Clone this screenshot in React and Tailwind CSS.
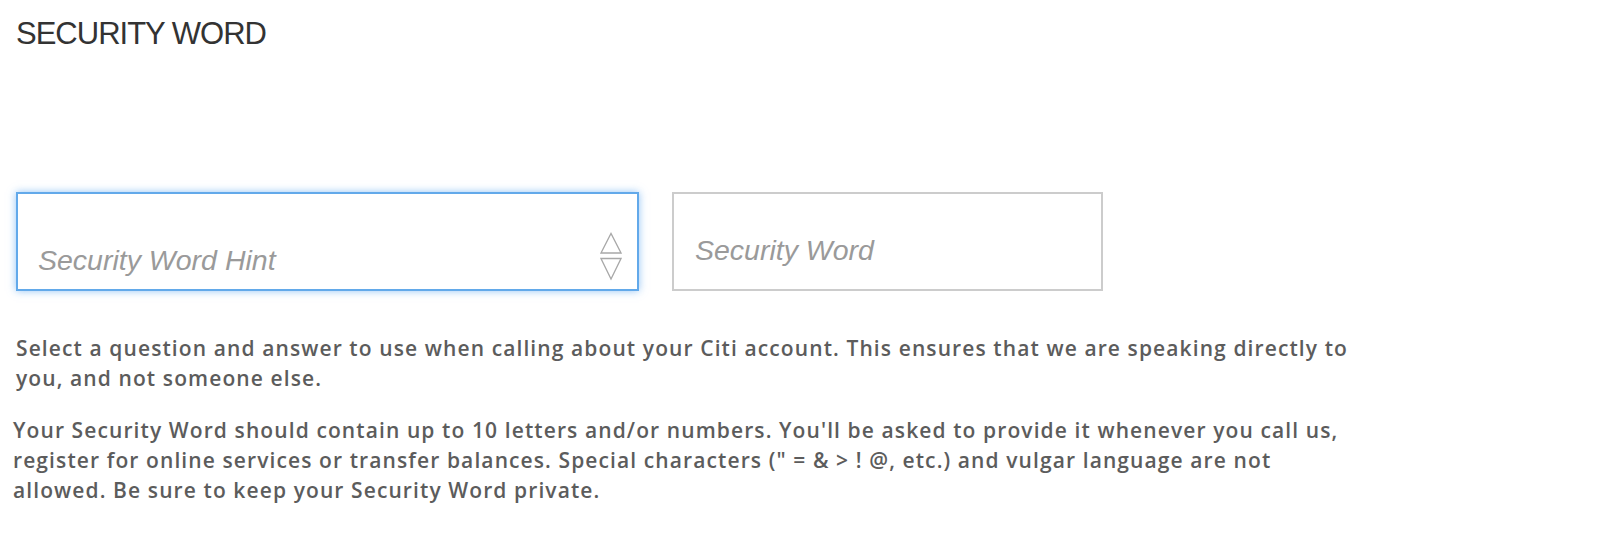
import React, { useState } from 'react';

const ArrowsIcon = () => (
  <svg width="22" height="50" viewBox="0 0 22 50" fill="none" stroke="#a8a8a8" strokeWidth="1.3">
    <polygon points="1,21 11,1.5 21,21" />
    <polygon points="1,26.5 21,26.5 11,47" />
  </svg>
);

const SecurityWord = () => {
  const [word, setWord] = useState('');

  return (
    <div className="min-h-screen bg-white pl-4 pt-4 font-['Liberation_Sans',Arial,sans-serif]">
      <h1 className="text-[31px] leading-9 tracking-[-1px] text-[#333]">SECURITY WORD</h1>

      <div className="mt-[140px] flex gap-[33px]">
        {/* hint select */}
        <div className="flex h-[99px] w-[623px] items-end justify-between border-2 border-[#62a9ea] pb-[13px] pl-[20px] pr-[15px] shadow-[0_0_8px_rgba(90,165,240,0.65)]">
          <span className="text-[28.5px] italic leading-[32px] text-[#9a9a9a]">Security Word Hint</span>
          <div className="mb-[-6px]">
            <ArrowsIcon />
          </div>
        </div>

        {/* word input */}
        <div className="h-[99px] w-[431px] border-2 border-[#cccccc]">
          <input
            type="text"
            maxLength={10}
            value={word}
            onChange={(e) => setWord(e.target.value)}
            placeholder="Security Word"
            className="h-full w-full pl-[21px] pt-[18px] text-[28.5px] text-[#333] outline-none placeholder:italic placeholder:text-[#9a9a9a]"
          />
        </div>
      </div>

      <div className="mt-[42px] w-[1340px] font-['Open_Sans',sans-serif] text-[21px] font-semibold leading-[30px] tracking-[1.1px] text-[#5c5c5c]">
        <p>
          Select a question and answer to use when calling about your Citi account. This ensures that we are speaking
          directly to you, and not someone else.
        </p>
        <p className="ml-[-3px] mt-[22px]">
          Your Security Word should contain up to 10 letters and/or numbers. You'll be asked to provide it whenever you
          call us, register for online services or transfer balances. Special characters (" = &amp; &gt; ! @, etc.) and
          vulgar language are not allowed. Be sure to keep your Security Word private.
        </p>
      </div>
    </div>
  );
};

export default SecurityWord;
